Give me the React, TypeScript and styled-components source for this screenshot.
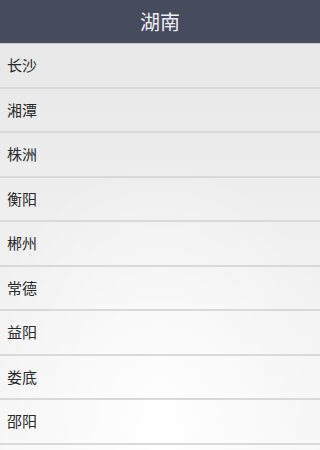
import React from "react";
import styled, { createGlobalStyle } from "styled-components";

const Global = createGlobalStyle`
  html, body { margin: 0; padding: 0; height: 450px; overflow: hidden; background: #f4f4f4; }
  body { font-family: "Noto Sans CJK SC", "Noto Sans", sans-serif; }
`;

const Screen = styled.div`
  width: 100%;
  min-width: 270px;
  height: 450px;
  display: flex;
  flex-direction: column;
  background:
    radial-gradient(ellipse 60% 58% at 50% 94%, rgba(255,255,255,0.95), rgba(255,255,255,0) 100%),
    linear-gradient(to bottom, #e6e6e6 0%, #efefef 50%, #f6f6f6 100%);
  overflow: hidden;
`;

const Header = styled.div`
  height: 43px;
  flex: 0 0 43px;
  background: #464b5d;
  border-bottom: 1px solid #c9cbd2;
  display: flex;
  align-items: center;
  justify-content: center;
  color: #eceef2;
  font-size: 20px;
`;

const List = styled.ul`
  list-style: none;
  margin: 0;
  padding: 0;
  display: flex;
  flex-direction: column;
`;

const Row = styled.li`
  box-sizing: border-box;
  height: 44.5px;
  flex: 0 0 44.5px;
  display: flex;
  align-items: center;
  padding-left: 7px;
  padding-bottom: 1px;
  font-size: 15px;
  color: #2a2a2a;
  border-bottom: 2px solid #d9d9d9;
`;

const cities = ["长沙", "湘潭", "株洲", "衡阳", "郴州", "常德", "益阳", "娄底", "邵阳"];

export default function App() {
  return (
    <>
      <Global />
      <Screen>
        <Header>湖南</Header>
        <List>
          {cities.map((c) => (
            <Row key={c}>{c}</Row>
          ))}
        </List>
      </Screen>
    </>
  );
}
